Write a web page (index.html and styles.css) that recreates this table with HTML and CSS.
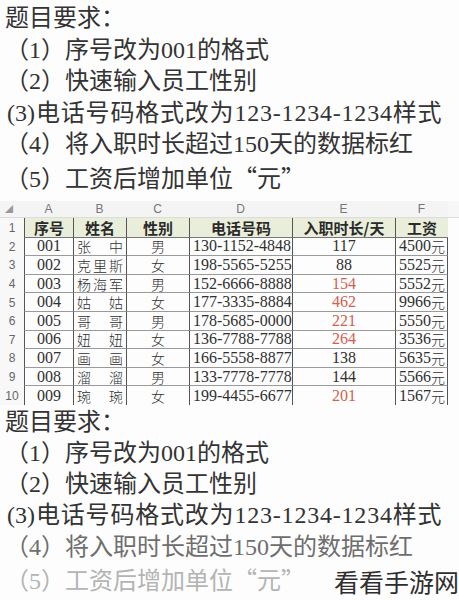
FILE: index.html
```html
<!DOCTYPE html>
<html lang="zh">
<head>
<meta charset="utf-8">
<link rel="stylesheet" href="styles.css">
</head>
<body>
<div class="page">
  <section class="req">
    <div class="line title">题目要求：</div>
    <div class="line">（1）序号改为001的格式</div>
    <div class="line">（2）快速输入员工性别</div>
    <div class="line l3"><span class="hp">(3)</span>电话号码格式改为123-1234-1234样式</div>
    <div class="line">（4）将入职时长超过150天的数据标红</div>
    <div class="line">（5）工资后增加单位<span class="cq">“元”</span></div>
  </section>

  <div class="sheet">
    <div class="corner">◢</div><div class="col">A</div><div class="col">B</div><div class="col">C</div><div class="col">D</div><div class="col">E</div><div class="col">F</div><div class="col tail"></div>

    <div class="rn">1</div><div class="hd">序号</div><div class="hd">姓名</div><div class="hd">性别</div><div class="hd">电话号码</div><div class="hd">入职时长/天</div><div class="hd">工资</div><div class="blank"></div>

    <div class="rn">2</div><div class="c ctr">001</div><div class="c nm"><span>张</span><span>中</span></div><div class="c ctr g">男</div><div class="c ph">130-1152-4848</div><div class="c ctr">117</div><div class="c pay">4500<span class="y">元</span></div><div class="blank"></div>
    <div class="rn">3</div><div class="c ctr">002</div><div class="c nm"><span>克</span><span>里</span><span>斯</span></div><div class="c ctr g">女</div><div class="c ph">198-5565-5255</div><div class="c ctr">88</div><div class="c pay">5525<span class="y">元</span></div><div class="blank"></div>
    <div class="rn">4</div><div class="c ctr">003</div><div class="c nm"><span>杨</span><span>海</span><span>军</span></div><div class="c ctr g">男</div><div class="c ph">152-6666-8888</div><div class="c ctr red">154</div><div class="c pay">5552<span class="y">元</span></div><div class="blank"></div>
    <div class="rn">5</div><div class="c ctr">004</div><div class="c nm"><span>姑</span><span>姑</span></div><div class="c ctr g">女</div><div class="c ph">177-3335-8884</div><div class="c ctr red">462</div><div class="c pay">9966<span class="y">元</span></div><div class="blank"></div>
    <div class="rn">6</div><div class="c ctr">005</div><div class="c nm"><span>哥</span><span>哥</span></div><div class="c ctr g">男</div><div class="c ph">178-5685-0000</div><div class="c ctr red">221</div><div class="c pay">5550<span class="y">元</span></div><div class="blank"></div>
    <div class="rn">7</div><div class="c ctr">006</div><div class="c nm"><span>妞</span><span>妞</span></div><div class="c ctr g">女</div><div class="c ph">136-7788-7788</div><div class="c ctr red">264</div><div class="c pay">3536<span class="y">元</span></div><div class="blank"></div>
    <div class="rn">8</div><div class="c ctr">007</div><div class="c nm"><span>画</span><span>画</span></div><div class="c ctr g">女</div><div class="c ph">166-5558-8877</div><div class="c ctr">138</div><div class="c pay">5635<span class="y">元</span></div><div class="blank"></div>
    <div class="rn">9</div><div class="c ctr">008</div><div class="c nm"><span>溜</span><span>溜</span></div><div class="c ctr g">男</div><div class="c ph">133-7778-7778</div><div class="c ctr">144</div><div class="c pay">5566<span class="y">元</span></div><div class="blank"></div>
    <div class="rn">10</div><div class="c ctr last">009</div><div class="c nm last"><span>琬</span><span>琬</span></div><div class="c ctr g last">女</div><div class="c ph last">199-4455-6677</div><div class="c ctr red last">201</div><div class="c pay last">1567<span class="y">元</span></div><div class="blank"></div>
  </div>

  <section class="req bottom">
    <div class="line title">题目要求：</div>
    <div class="line">（1）序号改为001的格式</div>
    <div class="line">（2）快速输入员工性别</div>
    <div class="line l3"><span class="hp">(3)</span>电话号码格式改为123-1234-1234样式</div>
    <div class="line fade1">（4）将入职时长超过150天的数据标红</div>
    <div class="line fade2">（5）工资后增加单位<span class="cq">“元”</span></div>
  </section>

  <div class="watermark">看看手游网</div>
</div>
</body>
</html>
```

FILE: styles.css
```css
html, body {
  margin: 0;
  padding: 0;
  background: #fdfdfd;
}

.page {
  position: relative;
  width: 459px;
  height: 600px;
  overflow: hidden;
}

.req {
  padding: 3px 0 0 5px;
  font-family: "Liberation Serif", "Noto Sans CJK SC", serif;
  font-size: 24px;
  color: #333;
}

.req .line {
  height: 31.6px;
  line-height: 31.6px;
  white-space: nowrap;
}

.req .l3 {
  margin-left: 2px;
  letter-spacing: 0.8px;
}

.req .hp {
  letter-spacing: 0;
  margin-right: 1px;
}

.req .cq {
  font-family: "Noto Sans CJK SC", sans-serif;
}

.req.bottom {
  padding-top: 2px;
}

.req.bottom .line {
  height: 31.2px;
  line-height: 31.2px;
}

.req .fade1 { color: #6e6e6e; }
.req .fade2 { color: #b4b4b4; }

/* spreadsheet */
.sheet {
  margin-top: 8px;
  display: grid;
  grid-template-columns: 24px 49px 53px 63px 103px 103px 53px 1fr;
  grid-template-rows: 17px 20px repeat(9, 18.6px);
  font-family: "Liberation Serif", "Noto Sans CJK SC", serif;
  color: #303030;
}

.corner, .col {
  background: #f4f4f4;
  font-family: "Liberation Sans", "Noto Sans CJK SC", sans-serif;
  font-size: 12px;
  color: #777;
  display: flex;
  align-items: center;
  justify-content: center;
  border-bottom: 1px solid #dcdcdc;
  box-sizing: border-box;
}

.corner {
  font-size: 8px;
  color: #999;
  justify-content: flex-start;
  padding-left: 5px;
}

.col.tail { background: #f7f7f7; }

.rn {
  font-family: "Liberation Sans", sans-serif;
  font-size: 12px;
  color: #666;
  display: flex;
  align-items: center;
  justify-content: center;
  background: #f8f8f8;
}

.hd {
  background: #e9eedb;
  font-family: "Noto Sans CJK SC", sans-serif;
  font-weight: 700;
  font-size: 15px;
  color: #2a2a2a;
  display: flex;
  align-items: center;
  justify-content: center;
  border-left: 1px solid #555;
  border-bottom: 1px solid #777;
  box-sizing: border-box;
  line-height: 1;
}

.c {
  font-size: 16px;
  display: flex;
  align-items: center;
  border-left: 1px solid #555;
  border-bottom: 1px solid #9a9a9a;
  box-sizing: border-box;
  line-height: 1;
  white-space: nowrap;
}

.c.last { border-bottom: none; }

.ctr { justify-content: center; }

.g, .nm, .y {
  font-family: "Noto Sans CJK SC", sans-serif;
  font-size: 14px;
  font-weight: 300;
}

.nm {
  justify-content: space-between;
  padding: 0 3px 0 3px;
}

.ph {
  padding-left: 3px;
}

.pay {
  justify-content: flex-end;
  padding-right: 2px;
  border-right: 1px solid #555;
}

.red { color: #d0604f; }

.blank { background: #fdfdfd; }

.watermark {
  position: absolute;
  right: 0;
  bottom: 4px;
  font-family: "Noto Sans CJK SC", sans-serif;
  font-size: 25px;
  color: #2e2e2e;
  line-height: 30px;
  background: rgba(253, 253, 253, 0.6);
}
```
